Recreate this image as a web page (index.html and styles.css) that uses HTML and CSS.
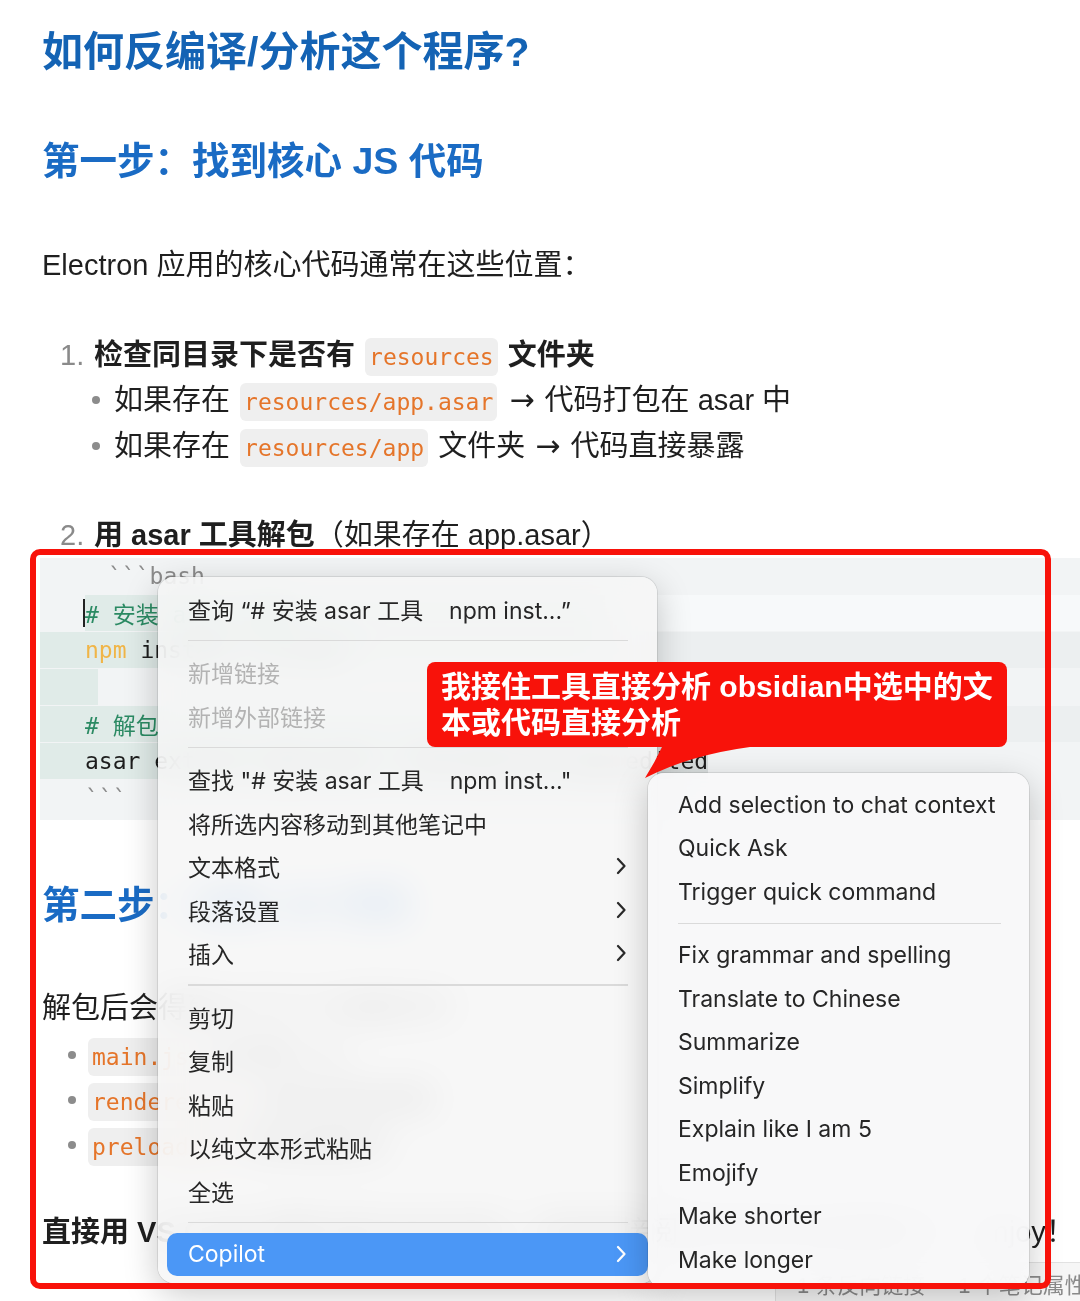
FILE: index.html
```html
<!DOCTYPE html>
<html lang="zh-CN">
<head>
<meta charset="utf-8">
<title>如何反编译/分析这个程序?</title>
<link rel="stylesheet" href="styles.css">
</head>
<body>
<div class="page">
  <main class="doc">
    <h1 class="h1">如何反编译/分析这个程序?</h1>
    <h2 class="h2">第一步：找到核心 JS 代码</h2>
    <p class="para">Electron 应用的核心代码通常在这些位置：</p>

    <div class="ol-item first"><span class="num">1.</span><span class="li-text"><b>检查同目录下是否有 </b><code class="ic">resources</code><b> 文件夹</b></span></div>
    <ul class="sub">
      <li class="sub-item"><span class="dot"></span><span>如果存在 <code class="ic">resources/app.asar</code> <span class="arrow">→</span> 代码打包在 asar 中</span></li>
      <li class="sub-item"><span class="dot"></span><span>如果存在 <code class="ic">resources/app</code> 文件夹 <span class="arrow">→</span> 代码直接暴露</span></li>
    </ul>
    <div class="ol-item second"><span class="num">2.</span><span class="li-text"><b>用 asar 工具解包</b>（如果存在 app.asar）</span></div>

    <div class="codeblock">
      <div class="crow head">```bash</div>
      <div class="crow r1"><span class="cursor"></span><span class="sel sel-a"><span class="c-com"># 安装 asar 工具</span></span></div>
      <div class="crow hl sel-b"><span class="c-cmd">npm</span> install -g asar</div>
      <div class="crow r3"><span class="blank-sel"></span></div>
      <div class="crow hl sel-b"><span class="c-com"># 解包</span></div>
      <div class="crow r5"><span class="sel-end">asar extract app.asar ./decompiled_app_edited</span></div>
      <div class="crow fence">```</div>
    </div>

    <h2 class="h2 step2">第二步：分析 JS 代码</h2>
    <p class="para p2">解包后会得到以下几个关键文件：</p>
    <ul class="top">
      <li class="top-item"><span class="dot"></span><span><code class="ic">main.js</code> 主进程入口</span></li>
      <li class="top-item"><span class="dot"></span><span><code class="ic">renderer.js</code> 渲染进程逻辑</span></li>
      <li class="top-item"><span class="dot"></span><span><code class="ic">preload.js</code> 预加载脚本</span></li>
    </ul>
    <p class="para last"><b>直接用 VS Code 打开</b> 解包后的目录，就能直接阅读和修改全部源码了， enjoy！</p>
  </main>

  <div class="statusbar"><span>1 条反向链接</span><span>1 个笔记属性</span></div>

  <div class="menu main-menu">
    <div class="mrow">查询 “# 安装 asar 工具    npm inst...”</div>
    <div class="msep"></div>
    <div class="mrow disabled">新增链接</div>
    <div class="mrow disabled">新增外部链接</div>
    <div class="msep"></div>
    <div class="mrow">查找 "# 安装 asar 工具    npm inst..."</div>
    <div class="mrow">将所选内容移动到其他笔记中</div>
    <div class="mrow"><span>文本格式</span><svg class="chev" viewBox="0 0 10 18" width="10" height="18"><path d="M2 2 L8.5 9 L2 16" fill="none" stroke="currentColor" stroke-width="2.2" stroke-linecap="round" stroke-linejoin="round"/></svg></div>
    <div class="mrow"><span>段落设置</span><svg class="chev" viewBox="0 0 10 18" width="10" height="18"><path d="M2 2 L8.5 9 L2 16" fill="none" stroke="currentColor" stroke-width="2.2" stroke-linecap="round" stroke-linejoin="round"/></svg></div>
    <div class="mrow"><span>插入</span><svg class="chev" viewBox="0 0 10 18" width="10" height="18"><path d="M2 2 L8.5 9 L2 16" fill="none" stroke="currentColor" stroke-width="2.2" stroke-linecap="round" stroke-linejoin="round"/></svg></div>
    <div class="msep"></div>
    <div class="mrow">剪切</div>
    <div class="mrow">复制</div>
    <div class="mrow">粘贴</div>
    <div class="mrow">以纯文本形式粘贴</div>
    <div class="mrow">全选</div>
    <div class="msep"></div>
    <div class="mrow active"><span>Copilot</span><svg class="chev" viewBox="0 0 10 18" width="10" height="18"><path d="M2 2 L8.5 9 L2 16" fill="none" stroke="currentColor" stroke-width="2.2" stroke-linecap="round" stroke-linejoin="round"/></svg></div>
  </div>

  <div class="menu submenu">
    <div class="srow">Add selection to chat context</div>
    <div class="srow">Quick Ask</div>
    <div class="srow">Trigger quick command</div>
    <div class="ssep"></div>
    <div class="srow">Fix grammar and spelling</div>
    <div class="srow">Translate to Chinese</div>
    <div class="srow">Summarize</div>
    <div class="srow">Simplify</div>
    <div class="srow">Explain like I am 5</div>
    <div class="srow">Emojify</div>
    <div class="srow">Make shorter</div>
    <div class="srow">Make longer</div>
  </div>

  <div class="callout">
    <p class="callout-text">我接住工具直接分析 obsidian中选中的文<br>本或代码直接分析</p>
    <svg class="tail" viewBox="0 0 130 36" width="130" height="36"><path d="M20 0 L120 0 L113 2 Q 53 10 8 33 Q 18 17 25 2 Z" fill="#f8120a"/></svg>
  </div>

  <div class="frame"></div>
</div>
</body>
</html>
```

FILE: styles.css
```css
* { box-sizing: border-box; margin: 0; padding: 0; }

html, body {
  width: 1080px;
  height: 1301px;
  overflow: hidden;
  background: #ffffff;
}

body {
  font-family: "Liberation Sans", "Noto Sans CJK SC", sans-serif;
  color: #1f1f1f;
}

.page {
  position: relative;
  width: 1080px;
  height: 1301px;
  overflow: hidden;
}

.doc {
  padding: 26px 0 0 42px;
}

.h1 {
  font-size: 41px;
  line-height: 52px;
  font-weight: 700;
  color: #1463b4;
}

.h2 {
  font-size: 37.5px;
  line-height: 44px;
  font-weight: 700;
  color: #1a6bc4;
  margin-top: 61px;
}

.para {
  font-size: 29px;
  line-height: 40px;
  margin-top: 62px;
  white-space: nowrap;
}

b { font-weight: 700; }

.arrow {
  font-family: "DejaVu Sans", sans-serif;
  font-size: 30px;
  line-height: 1;
  margin: 0 2px;
}

.ic {
  font-family: "DejaVu Sans Mono", "Noto Sans CJK SC", monospace;
  font-size: 23px;
  line-height: 1;
  color: #e5752a;
  background: #efefef;
  border-radius: 6px;
  padding: 6px 4px;
  margin: 0 2px;
}

.ol-item {
  display: flex;
  font-size: 29px;
  line-height: 40px;
  white-space: nowrap;
}

.ol-item.first { margin-top: 50px; }
.ol-item.second { margin-top: 46px; }

.num {
  width: 52px;
  padding-left: 18px;
  color: #8a8a8a;
}

.sub {
  list-style: none;
  margin-top: 2px;
}

.sub-item {
  display: flex;
  align-items: center;
  font-size: 29px;
  line-height: 46px;
  white-space: nowrap;
  padding-left: 50px;
  gap: 14px;
}

.dot {
  width: 8px;
  height: 8px;
  border-radius: 50%;
  background: #8c8c8c;
  flex: none;
}

/* code block */
.codeblock {
  margin: 3px 0 0 -2px;
  background: #f2f4f5;
  padding-bottom: 3px;
  font-family: "DejaVu Sans Mono", "Noto Sans CJK SC", monospace;
  font-size: 23px;
  color: #1d1d1d;
}

.crow {
  height: 36px;
  margin-bottom: 1px;
  display: flex;
  align-items: center;
  white-space: pre;
}

.crow.head {
  padding-left: 68px;
  color: #8b8b8b;
}

.crow.fence {
  padding-left: 45px;
  color: #8b8b8b;
}

.crow.hl {
  padding-left: 45px;
}

.cursor {
  margin-left: 43px;
  width: 2px;
  height: 28px;
  background: #222;
  flex: none;
}

.sel {
  flex: 1;
  align-self: stretch;
  display: flex;
  align-items: center;
}

.sel-a {
  background: linear-gradient(to right, #e0ebe8 0, #e0ebe8 520px, #f7f9fa 520px);
}

.sel-b {
  background: linear-gradient(to right, #e0ebe8 0, #e0ebe8 560px, #eceff0 560px);
}

.blank-sel {
  width: 58px;
  height: 100%;
  background: #e0ebe8;
}

.sel-end {
  align-self: stretch;
  display: flex;
  align-items: center;
  padding-left: 45px;
  background: linear-gradient(to right, #e0ebe8 0, #e0ebe8 560px, #d9dede 560px);
}

.c-com { color: #2b8a63; }
.c-cmd { color: #f0b548; }

.step2 { margin-top: 63px; }
.p2 { margin-top: 61px; }

.top {
  list-style: none;
  margin-top: 4.5px;
}

.top-item {
  display: flex;
  align-items: center;
  font-size: 29px;
  line-height: 45px;
  white-space: nowrap;
  padding-left: 26px;
  gap: 10px;
}

.last { margin-top: 44.5px; }

/* status bar */
.statusbar {
  position: absolute;
  left: 775px;
  top: 1262px;
  right: 0;
  bottom: 0;
  background: #f6f6f6;
  border-top: 1px solid #e2e2e2;
  border-left: 1px solid #e2e2e2;
  display: flex;
  gap: 33px;
  padding: 8px 0 0 21px;
  font-size: 22px;
  line-height: 30px;
  color: #8a8a8a;
  white-space: nowrap;
  z-index: 5;
}

/* menus */
.menu {
  position: absolute;
  background: rgba(246, 246, 246, 0.86);
  -webkit-backdrop-filter: blur(18px) saturate(1.2);
  backdrop-filter: blur(18px) saturate(1.2);
  border-radius: 16px;
  box-shadow: 0 0 0 1px rgba(0, 0, 0, 0.09), 0 10px 34px rgba(0, 0, 0, 0.22);
  color: #262626;
}

.main-menu {
  left: 158px;
  top: 577px;
  width: 499px;
  height: 706px;
  padding: 10px 9px 7px;
  z-index: 10;
}

.mrow {
  height: 43.5px;
  display: flex;
  align-items: center;
  justify-content: space-between;
  padding: 0 22px 0 21px;
  font-family: "Inter", "Noto Sans CJK SC", sans-serif;
  font-size: 23px;
  white-space: pre;
  border-radius: 10px;
}

.mrow.disabled { color: #b3b3b3; }

.mrow.active {
  background: #4b97f6;
  color: #ffffff;
}

.chev {
  flex: none;
  color: #2a2a2a;
}

.mrow.active .chev { color: #ffffff; }

.msep {
  height: 20px;
  display: flex;
  align-items: center;
  padding: 0 20px 0 21px;
}

.msep::after,
.ssep::after {
  content: "";
  flex: 1;
  height: 1.5px;
  background: #dadada;
}

.submenu {
  left: 648px;
  top: 773px;
  width: 381px;
  padding: 10px 9px 6px;
  background: rgba(248, 248, 249, 0.94);
  z-index: 11;
}

.srow {
  height: 43.5px;
  display: flex;
  align-items: center;
  padding: 0 10px 0 21px;
  font-family: "Inter", "Liberation Sans", sans-serif;
  font-size: 23px;
  white-space: nowrap;
}

.ssep {
  height: 20px;
  display: flex;
  align-items: center;
  padding: 0 19px 0 21px;
}

/* callout */
.callout {
  position: absolute;
  left: 427px;
  top: 662px;
  width: 580px;
  height: 85px;
  padding: 7px 14px;
  background: #f8120a;
  border-radius: 8px;
  z-index: 12;
}

.callout-text {
  font-size: 30px;
  line-height: 36px;
  font-weight: 700;
  color: #ffffff;
  white-space: nowrap;
}

.tail {
  position: absolute;
  left: 210px;
  top: 83px;
}

/* annotation frame */
.frame {
  position: absolute;
  left: 30px;
  top: 549px;
  width: 1021px;
  height: 740px;
  border: 6px solid #f8120a;
  border-radius: 10px;
  pointer-events: none;
  z-index: 13;
}
```
